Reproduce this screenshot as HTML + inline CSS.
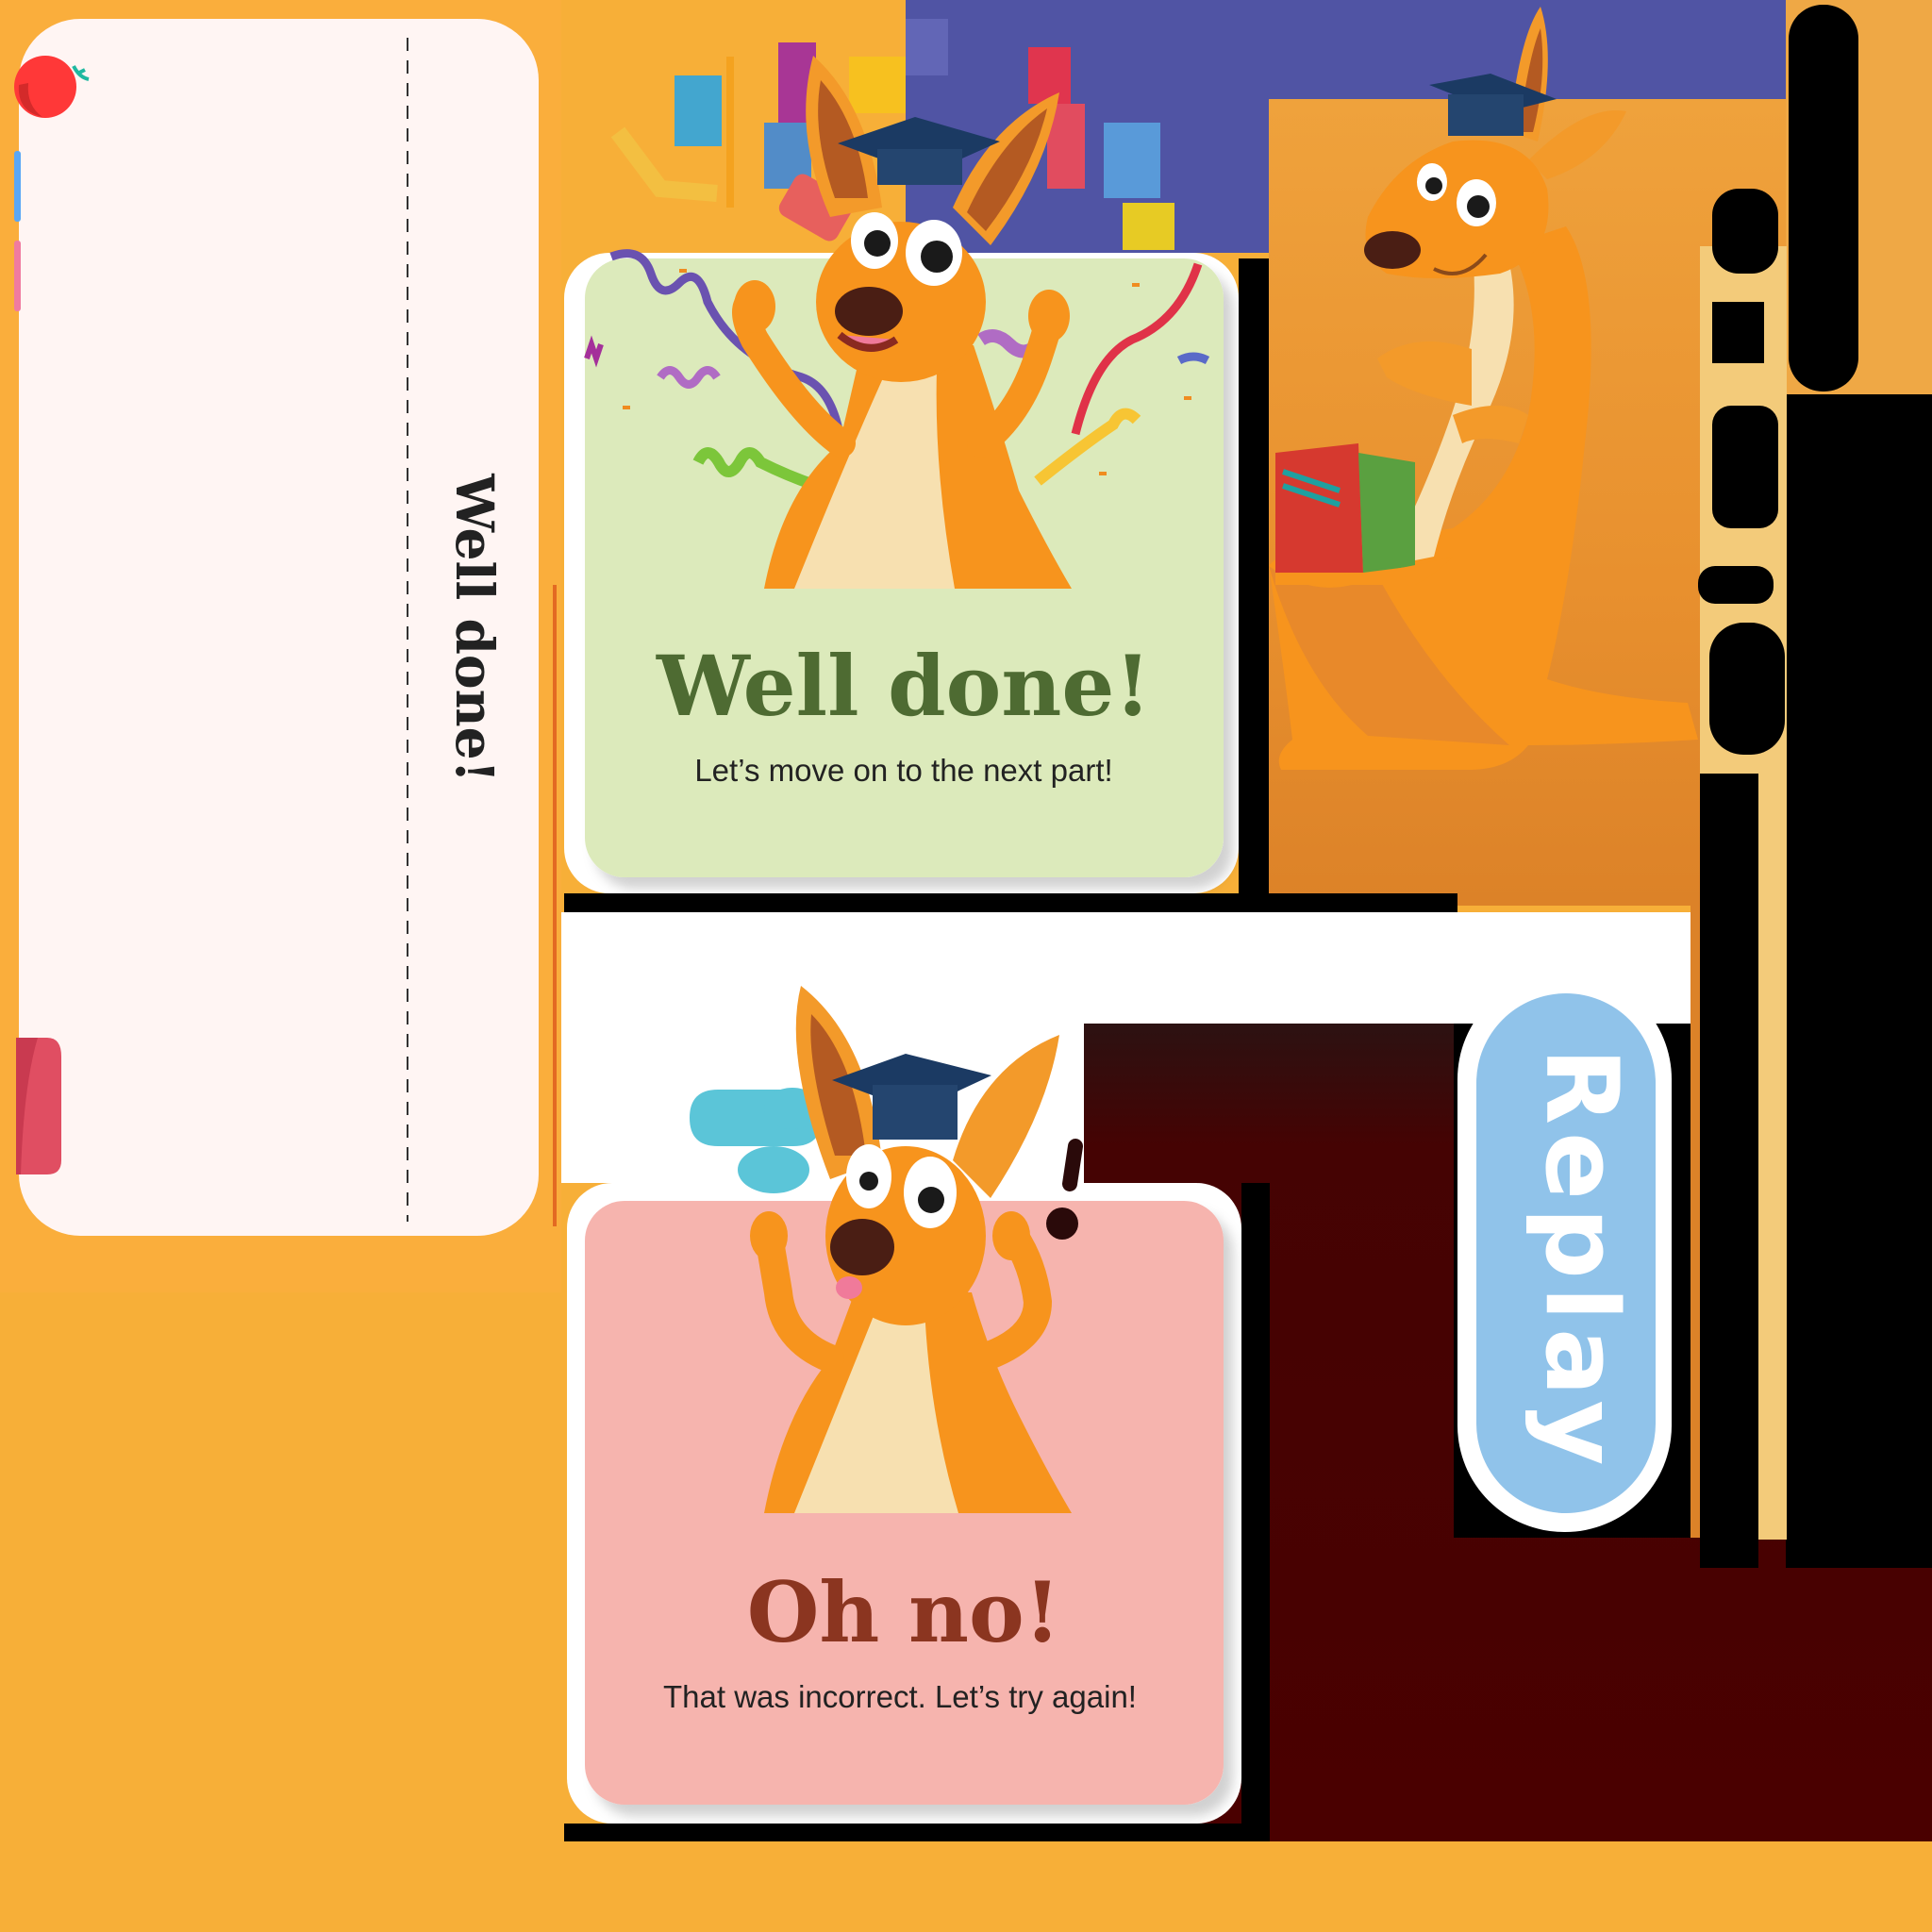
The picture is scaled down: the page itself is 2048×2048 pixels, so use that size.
<!DOCTYPE html>
<html><head><meta charset="utf-8"><style>
html,body{margin:0;padding:0;width:2048px;height:2048px;overflow:hidden;background:#F7AF38}
svg{display:block}
</style></head><body>
<svg width="2048" height="2048" viewBox="0 0 2048 2048" xmlns="http://www.w3.org/2000/svg">
<defs>
<linearGradient id="mar" x1="0" y1="0" x2="0" y2="1"><stop offset="0" stop-color="#2c1212"/><stop offset="0.15" stop-color="#450303"/><stop offset="1" stop-color="#4a0000"/></linearGradient>
<linearGradient id="bd" x1="0" y1="0" x2="0" y2="1"><stop offset="0" stop-color="#EFA23C"/><stop offset="0.6" stop-color="#E8902E"/><stop offset="1" stop-color="#DC8228"/></linearGradient>
<filter id="sh" x="-10%" y="-10%" width="130%" height="130%"><feDropShadow dx="10" dy="12" stdDeviation="6" flood-color="#000" flood-opacity="0.18"/></filter>
</defs>
<rect width="2048" height="2048" fill="#F7AF38"/>
<!-- left sheet -->
<rect x="0" y="0" width="595" height="1370" fill="#FAAE3C"/>
<rect x="20" y="20" width="551" height="1290" rx="65" fill="#FFF5F3"/>
<line x1="432" y1="40" x2="432" y2="1295" stroke="#333" stroke-width="2" stroke-dasharray="14,10"/>
<text x="0" y="0" transform="translate(484,666) rotate(90)" text-anchor="middle" font-family="DejaVu Serif, serif" font-weight="bold" font-size="55" fill="#222">Well done!</text>
<ellipse cx="48" cy="92" rx="33" ry="33" fill="#FF3838"/>
<path d="M20 90 Q18 118 45 124 Q28 112 30 88Z" fill="#D42A2A"/>
<path d="M78 70 Q84 82 94 84 M82 78 L90 74" stroke="#1FB8A0" stroke-width="4" fill="none"/>
<rect x="15" y="160" width="7" height="75" rx="3" fill="#5AA7F5"/>
<rect x="15" y="255" width="7" height="75" rx="3" fill="#F07BA0"/>
<path d="M17 1100 H50 Q65 1100 65 1120 V1230 Q65 1245 50 1245 H17Z" fill="#E04E62"/>
<path d="M17 1100 H40 Q25 1150 22 1245 H17Z" fill="#C93A50"/>
<line x1="588" y1="620" x2="588" y2="1300" stroke="#E36A22" stroke-width="4"/>

<!-- purple top -->
<path d="M960 0 H1893 V105 H1345 V268 H960Z" fill="#5054A4"/>
<!-- maroon first -->
<rect x="1149" y="1084" width="899" height="868" fill="url(#mar)"/>
<!-- kangaroo backdrop -->
<rect x="1345" y="105" width="555" height="855" fill="url(#bd)"/>
<rect x="1893" y="0" width="155" height="418" fill="#EFA845"/>
<rect x="1893" y="418" width="155" height="1244" fill="#000"/>
<rect x="1802" y="261" width="92" height="1371" fill="#F3CB7A"/>
<rect x="1802" y="820" width="62" height="842" fill="#000"/>
<rect x="1792" y="960" width="10" height="670" fill="#DC8228"/>
<!-- black glyph-like shapes -->
<rect x="1896" y="5" width="74" height="410" rx="36" fill="#000"/>
<rect x="1815" y="200" width="70" height="90" rx="28" fill="#000"/>
<rect x="1815" y="320" width="55" height="65" fill="#000"/>
<rect x="1815" y="430" width="70" height="130" rx="20" fill="#000"/>
<rect x="1800" y="600" width="80" height="40" rx="18" fill="#000"/>
<rect x="1812" y="660" width="80" height="140" rx="36" fill="#000"/>

<!-- white / black middle regions -->
<rect x="595" y="967" width="1197" height="118" fill="#fff"/>
<rect x="595" y="1085" width="554" height="169" fill="#fff"/>
<rect x="1541" y="1085" width="251" height="545" fill="#000"/>
<rect x="1313" y="274" width="32" height="686" fill="#000"/>
<rect x="598" y="947" width="947" height="20" fill="#000"/>
<rect x="1316" y="1254" width="30" height="698" fill="#000"/>
<rect x="598" y="1933" width="748" height="19" fill="#000"/>

<!-- confetti above green card -->
<g opacity="0.95">
<rect x="715" y="80" width="50" height="75" fill="#3AA6D8"/>
<rect x="770" y="60" width="8" height="160" fill="#F4A21E"/>
<rect x="825" y="45" width="40" height="110" fill="#A4309A"/>
<rect x="810" y="130" width="50" height="70" fill="#4A8BD0"/>
<rect x="900" y="60" width="60" height="60" fill="#F7C21E"/>
<rect x="960" y="20" width="45" height="60" fill="#6468B8"/>
<rect x="1090" y="50" width="45" height="60" fill="#E8344A"/>
<rect x="1110" y="110" width="40" height="90" fill="#E94C5C"/>
<rect x="1170" y="130" width="60" height="80" fill="#5A9EDC"/>
<rect x="1190" y="215" width="55" height="50" fill="#F0D21E"/>
<rect x="830" y="195" width="70" height="50" rx="10" fill="#E75C60" transform="rotate(30 865 220)"/>
<path d="M655 140 L700 200 L760 205" stroke="#F3C042" stroke-width="18" fill="none"/>
</g>

<!-- green card -->
<rect x="598" y="268" width="715" height="679" rx="48" fill="#fff"/>
<rect x="620" y="274" width="677" height="656" rx="42" fill="#DCEABB" filter="url(#sh)"/>
<g fill="none" stroke-width="9">
<path d="M648 272 Q680 260 690 290 Q700 320 720 300 Q740 280 750 320 Q780 380 850 400 Q880 410 890 460" stroke="#6A52B0"/>
<path d="M700 400 q10 -15 20 0 q10 15 20 0 q10 -15 20 0" stroke="#B06CC4"/>
<path d="M740 490 q10 -20 22 0 q10 20 22 0 q10 -20 22 0 q30 15 60 25" stroke="#7CC63A" stroke-width="12"/>
<path d="M1140 460 Q1160 380 1200 360 Q1250 340 1270 280" stroke="#E03248"/>
<path d="M1040 360 q15 -10 30 5 q15 15 30 0" stroke="#B06CC4" stroke-width="14"/>
<path d="M1100 510 Q1150 470 1180 450 q10 -20 25 -5" stroke="#F7C534" stroke-width="12"/>
<path d="M1250 382 q15 -8 30 0" stroke="#5A6AC8"/>
<path d="M622 380 l5 -15 l5 15 l5 -15" stroke="#A4309A" stroke-width="6"/>
</g>
<g fill="#F08C20"><rect x="720" y="285" width="8" height="4"/><rect x="1200" y="300" width="8" height="4"/><rect x="1255" y="420" width="8" height="4"/><rect x="660" y="430" width="8" height="4"/><rect x="1165" y="500" width="8" height="4"/></g>

<!-- kangaroo 1 -->
<g>
<path d="M810 624 Q830 520 890 470 L914 366 L1032 366 Q1060 450 1080 520 Q1110 580 1136 624Z" fill="#F7941D"/>
<path d="M842 624 Q900 480 940 392 L993 392 Q990 500 1012 624Z" fill="#F7E0B0"/>
<path d="M892 470 Q850 440 800 360 Q785 330 795 320" stroke="#F7941D" stroke-width="30" fill="none" stroke-linecap="round"/>
<path d="M1040 470 Q1080 440 1100 380 Q1110 350 1115 330" stroke="#F7941D" stroke-width="30" fill="none" stroke-linecap="round"/>
<ellipse cx="800" cy="325" rx="22" ry="28" fill="#F7941D"/>
<ellipse cx="1112" cy="335" rx="22" ry="28" fill="#F7941D"/>
<path d="M880 230 Q840 140 862 59 Q920 110 935 220Z" fill="#F39A2A"/>
<path d="M885 210 Q860 140 870 85 Q910 130 920 210Z" fill="#B45A22"/>
<path d="M1010 220 Q1050 130 1123 98 Q1110 180 1050 260Z" fill="#F39A2A"/>
<path d="M1025 225 Q1060 150 1110 115 Q1095 180 1045 245Z" fill="#B45A22"/>
<ellipse cx="955" cy="320" rx="90" ry="85" fill="#F7941D"/>
<path d="M888 152 L970 124 L1060 150 L980 186Z" fill="#1B3A63"/>
<rect x="930" y="158" width="90" height="38" fill="#24456F"/>
<ellipse cx="927" cy="255" rx="25" ry="30" fill="#fff"/>
<ellipse cx="990" cy="268" rx="30" ry="35" fill="#fff"/>
<circle cx="930" cy="258" r="14" fill="#1a1a1a"/>
<circle cx="993" cy="272" r="17" fill="#1a1a1a"/>
<ellipse cx="921" cy="330" rx="36" ry="26" fill="#4A1E14"/>
<path d="M890 355 Q920 380 950 360" stroke="#8A2A20" stroke-width="8" fill="#F07A9A"/>
</g>

<!-- pink card -->
<rect x="601" y="1254" width="715" height="679" rx="48" fill="#fff"/>
<rect x="620" y="1273" width="677" height="640" rx="42" fill="#F6B4AE" filter="url(#sh)"/>

<!-- kangaroo 2 -->
<g>
<path d="M731 1185 q0 -30 30 -30 h80 q30 0 30 30 q0 30 -30 30 h-80 q-30 0 -30 -30Z" fill="#5BC5D8"/>
<ellipse cx="820" cy="1240" rx="38" ry="25" fill="#5BC5D8"/>
<ellipse cx="840" cy="1175" rx="30" ry="22" fill="#5BC5D8"/>
<circle cx="1126" cy="1297" r="17" fill="#2a0a0a"/>
<path d="M1140 1215 L1134 1255" stroke="#2a0a0a" stroke-width="16" stroke-linecap="round"/>
<path d="M810 1604 Q830 1500 880 1440 L906 1370 L1030 1370 Q1050 1440 1080 1500 Q1110 1560 1136 1604Z" fill="#F7941D"/>
<path d="M842 1604 Q900 1460 930 1385 L980 1385 Q985 1500 1016 1604Z" fill="#F7E0B0"/>
<path d="M880 1440 Q830 1420 825 1370 Q820 1340 815 1310" stroke="#F7941D" stroke-width="30" fill="none" stroke-linecap="round"/>
<path d="M1040 1440 Q1100 1420 1100 1380 Q1095 1340 1075 1310" stroke="#F7941D" stroke-width="30" fill="none" stroke-linecap="round"/>
<ellipse cx="815" cy="1310" rx="20" ry="26" fill="#F7941D"/>
<ellipse cx="1072" cy="1310" rx="20" ry="26" fill="#F7941D"/>
<path d="M880 1250 Q830 1120 849 1045 Q920 1100 935 1230Z" fill="#F39A2A"/>
<path d="M885 1225 Q855 1130 860 1075 Q905 1120 918 1225Z" fill="#B45A22"/>
<path d="M1010 1230 Q1040 1130 1123 1097 Q1110 1180 1050 1270Z" fill="#F39A2A"/>
<ellipse cx="960" cy="1310" rx="85" ry="95" fill="#F7941D"/>
<path d="M882 1145 L960 1117 L1051 1140 L970 1178Z" fill="#1B3A63"/>
<rect x="925" y="1150" width="90" height="58" fill="#24456F"/>
<ellipse cx="921" cy="1247" rx="24" ry="34" fill="#fff"/>
<ellipse cx="986" cy="1264" rx="28" ry="38" fill="#fff"/>
<circle cx="921" cy="1252" r="10" fill="#1a1a1a"/>
<circle cx="987" cy="1272" r="14" fill="#1a1a1a"/>
<ellipse cx="914" cy="1322" rx="34" ry="30" fill="#4A1E14"/>
<ellipse cx="900" cy="1365" rx="14" ry="12" fill="#F07A9A"/>
</g>

<!-- kangaroo 3 -->
<g>
<path d="M1345 600 Q1360 580 1420 580 L1540 560 Q1600 520 1620 440 Q1640 330 1600 260 L1660 240 Q1700 300 1680 470 Q1665 620 1640 720 Q1700 740 1789 745 L1800 784 Q1700 790 1620 790 Q1600 815 1560 816 L1358 816 Q1350 800 1370 784 Q1360 700 1345 600Z" fill="#F7941D"/>
<path d="M1345 600 Q1400 640 1460 610 Q1520 720 1600 790 L1450 780 Q1380 720 1345 600Z" fill="#E8892A"/>
<path d="M1595 260 Q1620 340 1580 430 Q1540 510 1520 590 L1470 600 Q1520 500 1545 420 Q1570 340 1560 260Z" fill="#F7E0B0"/>
<path d="M1352 480 L1440 470 L1445 607 L1352 607Z" fill="#D6392F"/>
<path d="M1440 480 L1500 490 L1500 600 L1445 607Z" fill="#5AA040"/>
<path d="M1360 500 l60 20 M1360 515 l60 20" stroke="#1FA0A0" stroke-width="6"/>
<path d="M1352 607 Q1420 620 1540 590 Q1520 610 1500 620 L1352 620Z" fill="#F7941D"/>
<path d="M1460 380 Q1500 350 1560 370 L1560 430 Q1500 420 1470 400Z" fill="#F39A2A"/>
<path d="M1540 440 Q1590 420 1620 440 L1610 470 Q1570 460 1550 470Z" fill="#F39A2A"/>
<path d="M1600 140 Q1610 40 1633 7 Q1650 60 1630 150Z" fill="#F39A2A"/>
<path d="M1610 140 Q1620 60 1633 30 Q1640 80 1625 140Z" fill="#B45A22"/>
<path d="M1620 170 Q1680 110 1724 118 Q1700 170 1640 190Z" fill="#F39A2A"/>
<path d="M1450 230 Q1480 170 1540 150 Q1620 140 1640 200 Q1650 270 1590 290 Q1520 300 1470 290 Q1440 270 1450 230Z" fill="#F7941D"/>
<path d="M1515 90 L1580 78 L1650 105 L1590 120Z" fill="#1B3A63"/>
<rect x="1535" y="100" width="80" height="44" fill="#24456F"/>
<ellipse cx="1518" cy="193" rx="16" ry="20" fill="#fff"/>
<ellipse cx="1565" cy="215" rx="21" ry="25" fill="#fff"/>
<circle cx="1520" cy="197" r="9" fill="#1a1a1a"/>
<circle cx="1567" cy="219" r="12" fill="#1a1a1a"/>
<ellipse cx="1476" cy="265" rx="30" ry="20" fill="#4A1E14"/>
<path d="M1520 285 Q1550 300 1575 270" stroke="#8A4A1A" stroke-width="4" fill="none"/>
</g>

<!-- Replay button -->
<rect x="1545" y="1031" width="227" height="593" rx="113" fill="#fff"/>
<rect x="1565" y="1053" width="190" height="551" rx="95" fill="#90C3EA"/>
<text transform="translate(1640,1336) rotate(90)" text-anchor="middle" font-family="DejaVu Sans, sans-serif" font-weight="bold" font-size="106" fill="#fff" letter-spacing="8">Replay</text>

<!-- card texts -->
<text x="958" y="758" text-anchor="middle" font-family="DejaVu Serif, serif" font-weight="bold" font-size="88" fill="#4E6B32">Well done!</text>
<text x="958" y="828" text-anchor="middle" font-family="Liberation Sans Narrow, Liberation Sans, sans-serif" font-size="33" fill="#222">Let’s move on to the next part!</text>
<text x="958" y="1740" text-anchor="middle" font-family="DejaVu Serif, serif" font-weight="bold" font-size="88" fill="#8B3520">Oh no!</text>
<text x="954" y="1810" text-anchor="middle" font-family="Liberation Sans Narrow, Liberation Sans, sans-serif" font-size="33" fill="#222">That was incorrect. Let’s try again!</text>
</svg>
</body></html>
